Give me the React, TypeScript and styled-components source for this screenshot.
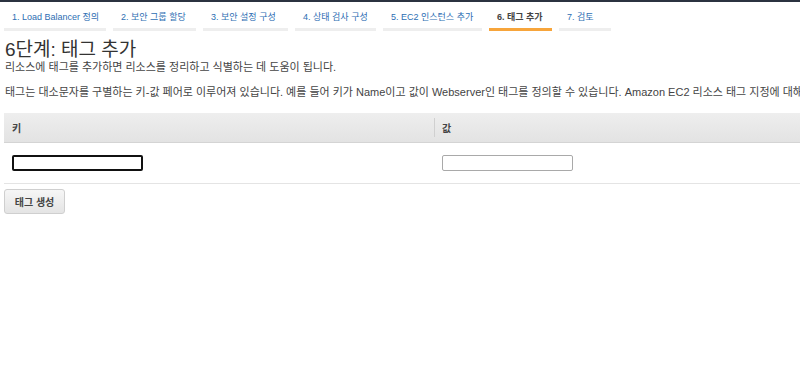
import React from 'react';
import styled, { createGlobalStyle } from 'styled-components';

const GlobalStyle = createGlobalStyle`
  html, body {
    margin: 0;
    padding: 0;
    background: #ffffff;
    font-family: "Liberation Sans", "Noto Sans CJK KR", sans-serif;
    color: #444444;
  }
`;

const TopBar = styled.div`
  height: 2px;
  background: #2b3340;
`;

const Steps = styled.nav`
  display: flex;
  gap: 7px;
  padding: 9px 0 0 4px;
`;

const Step = styled.div<{ $active?: boolean; $w: number }>`
  width: ${(p) => p.$w}px;
  box-sizing: border-box;
  padding: 0 0 5px 8px;
  font-size: 9px;
  line-height: 12px;
  white-space: nowrap;
  color: ${(p) => (p.$active ? '#444444' : '#2d6eb3')};
  font-weight: ${(p) => (p.$active ? 'bold' : 'normal')};
  border-bottom: 3px solid ${(p) => (p.$active ? '#f7a53b' : '#eeeeee')};
`;

const Content = styled.main`
  padding: 0 0 0 5px;
`;

const Title = styled.h1`
  margin: 8px 0 0;
  font-size: 19px;
  line-height: 21px;
  font-weight: normal;
  color: #333333;
`;

const Lead = styled.p`
  margin: 0;
  font-size: 11px;
  line-height: 14px;
  color: #444444;
`;

const Info = styled.p`
  margin: 11px 0 0;
  font-size: 11px;
  line-height: 14px;
  color: #444444;
  white-space: nowrap;
  overflow: hidden;
`;

const Table = styled.div`
  margin: 14px 0 0 4px;
  width: 796px;
  border-bottom: 1px solid #e4e4e4;
`;

const HeadRow = styled.div`
  display: grid;
  grid-template-columns: 430px 1fr;
  height: 29px;
  background: linear-gradient(#eeeeee, #e3e3e3);
  border-bottom: 1px solid #d4d4d4;
`;

const HeadCell = styled.div<{ $divider?: boolean }>`
  display: flex;
  align-items: center;
  padding-left: 8px;
  font-size: 10px;
  font-weight: bold;
  color: #444444;
  position: relative;
  &::before {
    content: '';
    display: ${(p) => (p.$divider ? 'block' : 'none')};
    position: absolute;
    left: 0;
    top: 5px;
    bottom: 5px;
    width: 1px;
    background: #d0d0d0;
  }
`;

const BodyRow = styled.div`
  display: grid;
  grid-template-columns: 430px 1fr;
  height: 40px;
  align-items: center;
`;

const BodyCell = styled.div`
  padding-left: 8px;
`;

const TextInput = styled.input<{ $focused?: boolean }>`
  display: block;
  width: 131px;
  height: 16px;
  box-sizing: border-box;
  margin: 0;
  padding: 0 3px;
  font-size: 9px;
  background: #ffffff;
  border: ${(p) => (p.$focused ? '2px solid #111111' : '1px solid #a9a9a9')};
  border-radius: 2px;
  outline: none;
`;

const ButtonBar = styled.div`
  padding: 5px 0 0 4px;
`;

const Button = styled.button`
  width: 61px;
  height: 25px;
  padding: 0;
  font-family: "Liberation Sans", "Noto Sans CJK KR", sans-serif;
  font-size: 10px;
  font-weight: bold;
  color: #444444;
  background: linear-gradient(#f6f6f6, #e4e4e4);
  border: 1px solid #cfcfcf;
  border-radius: 3px;
  cursor: pointer;
`;

const steps = [
  { label: '1. Load Balancer 정의', w: 102 },
  { label: '2. 보안 그룹 할당', w: 83 },
  { label: '3. 보안 설정 구성', w: 85 },
  { label: '4. 상태 검사 구성', w: 81 },
  { label: '5. EC2 인스턴스 추가', w: 99 },
  { label: '6. 태그 추가', w: 63, active: true },
  { label: '7. 검토', w: 52 },
];

export default function App() {
  return (
    <>
      <GlobalStyle />
      <TopBar />
      <Steps>
        {steps.map((s) => (
          <Step key={s.label} $w={s.w} $active={s.active}>
            {s.label}
          </Step>
        ))}
      </Steps>
      <Content>
        <Title>6단계: 태그 추가</Title>
        <Lead>리소스에 태그를 추가하면 리소스를 정리하고 식별하는 데 도움이 됩니다.</Lead>
        <Info>
          태그는 대소문자를 구별하는 키-값 페어로 이루어져 있습니다. 예를 들어 키가 Name이고 값이 Webserver인 태그를 정의할 수 있습니다. Amazon EC2 리소스 태그 지정에 대해 자세히 알아보십시오.
        </Info>
      </Content>
      <Table>
        <HeadRow>
          <HeadCell>키</HeadCell>
          <HeadCell $divider>값</HeadCell>
        </HeadRow>
        <BodyRow>
          <BodyCell>
            <TextInput $focused />
          </BodyCell>
          <BodyCell>
            <TextInput />
          </BodyCell>
        </BodyRow>
      </Table>
      <ButtonBar>
        <Button>태그 생성</Button>
      </ButtonBar>
    </>
  );
}
